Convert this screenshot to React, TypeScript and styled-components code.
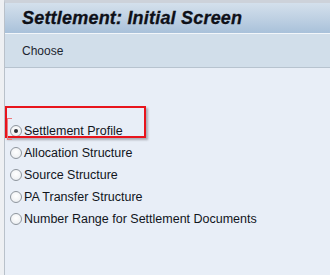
import React, { useState } from "react";
import styled, { createGlobalStyle } from "styled-components";

const GlobalStyle = createGlobalStyle`
    html, body {
        margin: 0;
        padding: 0;
        background: #eef0f3;
    }
    body {
        font-family: Tahoma, "Liberation Sans", Arial, sans-serif;
    }
`;

const Page = styled.div`
    height: 275px;
    padding-left: 4px;
    display: flex;
    flex-direction: column;
`;

const Frame = styled.div`
    flex: 1;
    display: flex;
    flex-direction: column;
    border-left: 1px solid #b9c1ca;
    border-top: 3px solid #cdd2da;
    background: #e8eef7;
`;

const TitleBar = styled.div`
    height: 30px;
    display: flex;
    align-items: center;
    padding-left: 17px;
    background: linear-gradient(to bottom, #d4e0ec 0%, #bfd1e3 50%, #a9c1da 100%);
    border-bottom: 1px solid #f2f6fa;
`;

const Title = styled.h1`
    margin: 0;
    font-family: "Liberation Sans", Arial, sans-serif;
    font-size: 18px;
    font-weight: bold;
    font-style: italic;
    color: #0e1018;
    letter-spacing: 0.2px;
    -webkit-text-stroke: 0.3px #0e1018;
`;

const Toolbar = styled.div`
    height: 33px;
    display: flex;
    align-items: center;
    padding-left: 17px;
    background: #d1deea;
    border-bottom: 1px solid #b7c3cf;
`;

const ToolButton = styled.span`
    font-family: "Liberation Sans", Arial, sans-serif;
    font-size: 12px;
    color: #1c2530;
`;

const Body = styled.div`
    position: relative;
    flex: 1;
    padding: 52px 0 0 5px;
`;

const List = styled.div`
    display: flex;
    flex-direction: column;
`;

const Row = styled.label`
    height: 22px;
    display: flex;
    align-items: center;
    gap: 2px;
    font-family: "Liberation Sans", Arial, sans-serif;
    font-size: 12.5px;
    color: #11151c;
    cursor: pointer;
`;

const Radio = styled.span<{ $checked: boolean }>`
    width: 12px;
    height: 12px;
    flex-shrink: 0;
    box-sizing: border-box;
    border-radius: 50%;
    border: 1px solid #8f969e;
    background: radial-gradient(circle at 50% 40%, #ffffff 0%, #f1f3f5 60%, #dfe3e8 100%);
    display: flex;
    align-items: center;
    justify-content: center;

    &::after {
        content: "";
        width: 4px;
        height: 4px;
        border-radius: 50%;
        background: #2a2f36;
        display: ${(props) => (props.$checked ? "block" : "none")};
    }
`;

const Highlight = styled.div`
    position: absolute;
    left: 0;
    top: 38px;
    width: 141px;
    height: 32px;
    box-sizing: border-box;
    border: 2px solid #e8141c;
    box-shadow: 2px 2px 2px rgba(90, 90, 100, 0.45);
    pointer-events: none;
`;

const Bracket = styled.div`
    position: absolute;
    left: 2px;
    top: 50px;
    width: 5px;
    height: 22px;
    box-sizing: border-box;
    border: 1px solid #ec7a7e;
    border-right: none;
    pointer-events: none;
`;

const options = [
    "Settlement Profile",
    "Allocation Structure",
    "Source Structure",
    "PA Transfer Structure",
    "Number Range for Settlement Documents",
];

const App = () => {
    const [selected, setSelected] = useState(0);

    return (
        <>
            <GlobalStyle />
            <Page>
                <Frame>
                    <TitleBar>
                        <Title>Settlement: Initial Screen</Title>
                    </TitleBar>
                    <Toolbar>
                        <ToolButton>Choose</ToolButton>
                    </Toolbar>
                    <Body>
                        <List>
                            {options.map((opt, i) => (
                                <Row key={opt} onClick={() => setSelected(i)}>
                                    <Radio $checked={selected === i} />
                                    {opt}
                                </Row>
                            ))}
                        </List>
                        <Highlight />
                        <Bracket />
                    </Body>
                </Frame>
            </Page>
        </>
    );
};

export default App;
